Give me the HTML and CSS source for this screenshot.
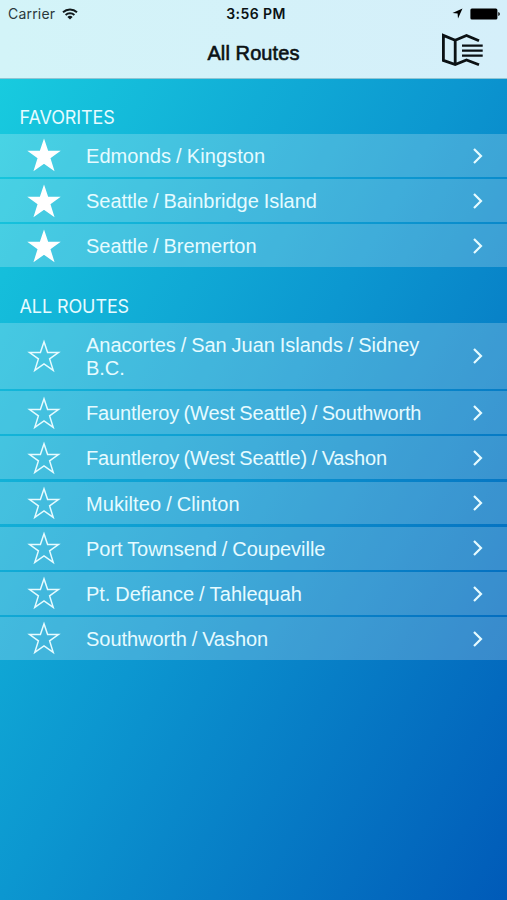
FILE: index.html
```html
<!DOCTYPE html>
<html lang="en">
<head>
  <meta charset="UTF-8" />
  <meta name="viewport" content="width=device-width, initial-scale=1" />
  <title>All Routes</title>
  <link rel="stylesheet" href="styles.css">
</head>
<body>

  <!-- Shared icons -->
  <svg class="sprite" aria-hidden="true">
    <symbol id="star" viewBox="0 0 34 34">
      <path d="M17 2.8 L20.6 13.6 H31.4 L22.6 19.9 L26.2 31.4 L17 25 L7.8 31.4 L11.4 19.9 L2.6 13.6 H13.4 Z" />
    </symbol>
    <symbol id="chevron" viewBox="0 0 12 18">
      <path d="M2 2 L9 9 L2 16" />
    </symbol>
  </svg>

  <header class="header">
    <div class="status-bar">
      <div class="status-left">
        <span class="carrier">Carrier</span>
        <svg class="wifi" width="16" height="12" viewBox="0 0 16 12">
          <path d="M1 4.3 A10.2 10.2 0 0 1 15 4.3 M3.6 7 A6.4 6.4 0 0 1 12.4 7" />
          <path class="dot" d="M8 11.6 L5.4 9 A3.7 3.7 0 0 1 10.6 9 Z" />
        </svg>
      </div>
      <span class="time">3:56 PM</span>
      <div class="status-right">
        <svg width="11" height="11" viewBox="0 0 11 11">
          <path d="M10.5 .5 L6 10.4 L5.6 5.5 L.5 5 Z" />
        </svg>
        <svg width="31" height="12" viewBox="0 0 31 12">
          <rect x=".4" y=".4" width="27" height="11.2" rx="1.5" />
          <path d="M28.3 3.9 A2.2 2.2 0 0 1 28.3 8.1 Z" />
        </svg>
      </div>
    </div>
    <div class="nav-bar">
      <h1 class="title">All Routes</h1>
      <button class="map-button" aria-label="Map">
        <svg width="42" height="34" viewBox="0 0 42 34">
          <path d="M38 7.8 L25.5 2.5 L14.2 7.2 L2.4 2.4 V27.4 L14.2 31.6 L25.5 27 L38 31.8 M14.2 7.2 V31.6" />
          <path class="lines" d="M21 12.6 H41.7 M21 17.6 H41.7 M21 22.6 H41.7" />
        </svg>
      </button>
    </div>
  </header>

  <main>
    <section>
      <h2 class="section-title">FAVORITES</h2>
      <ul class="routes">
        <li class="route">
          <svg class="star filled"><use href="#star" /></svg>
          <span class="name wide">Edmonds / Kingston</span>
          <svg class="chevron"><use href="#chevron" /></svg>
        </li>
        <li class="route">
          <svg class="star filled"><use href="#star" /></svg>
          <span class="name">Seattle / Bainbridge Island</span>
          <svg class="chevron"><use href="#chevron" /></svg>
        </li>
        <li class="route">
          <svg class="star filled"><use href="#star" /></svg>
          <span class="name">Seattle / Bremerton</span>
          <svg class="chevron"><use href="#chevron" /></svg>
        </li>
      </ul>
    </section>

    <section>
      <h2 class="section-title">ALL ROUTES</h2>
      <ul class="routes">
        <li class="route tall">
          <svg class="star"><use href="#star" /></svg>
          <span class="name">Anacortes / San Juan Islands / Sidney B.C.</span>
          <svg class="chevron"><use href="#chevron" /></svg>
        </li>
        <li class="route">
          <svg class="star"><use href="#star" /></svg>
          <span class="name long">Fauntleroy (West Seattle) / Southworth</span>
          <svg class="chevron"><use href="#chevron" /></svg>
        </li>
        <li class="route">
          <svg class="star"><use href="#star" /></svg>
          <span class="name long">Fauntleroy (West Seattle) / <span class="kern">V</span>ashon</span>
          <svg class="chevron"><use href="#chevron" /></svg>
        </li>
        <li class="route">
          <svg class="star"><use href="#star" /></svg>
          <span class="name wide">Mukilteo / Clinton</span>
          <svg class="chevron"><use href="#chevron" /></svg>
        </li>
        <li class="route">
          <svg class="star"><use href="#star" /></svg>
          <span class="name">Port Townsend / Coupeville</span>
          <svg class="chevron"><use href="#chevron" /></svg>
        </li>
        <li class="route">
          <svg class="star"><use href="#star" /></svg>
          <span class="name">Pt. Defiance / <span class="kern">T</span>ahlequah</span>
          <svg class="chevron"><use href="#chevron" /></svg>
        </li>
        <li class="route">
          <svg class="star"><use href="#star" /></svg>
          <span class="name">Southworth / <span class="kern">V</span>ashon</span>
          <svg class="chevron"><use href="#chevron" /></svg>
        </li>
      </ul>
    </section>
  </main>

</body>
</html>
```

FILE: styles.css
```css
* {
  box-sizing: border-box;
}

body {
  margin: 0;
  min-height: 100vh;
  background: linear-gradient(to bottom right, #19d0e0 0%, #0c97d0 50%, #005ab8 100%);
  font-family: "Liberation Sans", Arial, sans-serif;
  color: #fff;
}

.sprite {
  display: none;
}

/* Header */
.header {
  height: 79px;
  background: linear-gradient(to right, #d3f4f8, #d5effa);
  border-bottom: 1px solid #8fc5d3;
  color: #0b1114;
}

.status-bar {
  display: grid;
  grid-template-columns: 1fr auto 1fr;
  align-items: center;
  height: 27px;
  padding: 0 6px 0 8px;
  font-family: Inter, sans-serif;
  font-size: 14px;
}

.status-left,
.status-right {
  display: flex;
  align-items: center;
  gap: 7px;
}

.status-right {
  justify-content: flex-end;
}

.carrier {
  color: #2b383c;
  letter-spacing: 0.2px;
}

.time {
  margin-left: 3px;
  font-weight: 600;
  letter-spacing: 0.4px;
}

.wifi {
  fill: none;
  stroke: #10181a;
  stroke-width: 1.9;
}

.wifi .dot {
  fill: #10181a;
  stroke: none;
}

.nav-bar {
  display: grid;
  grid-template-columns: 1fr auto 1fr;
  align-items: center;
  height: 51px;
  padding-right: 24px;
}

.title {
  grid-column: 2;
  margin: 0 -12px 0 12px;
  font-size: 20px;
  font-weight: 400;
  line-height: 24px;
  letter-spacing: 0.1px;
  -webkit-text-stroke: 0.6px #0b1114;
}

.map-button {
  justify-self: end;
  height: 34px;
  margin-bottom: 5px;
  padding: 0;
  border: none;
  background: none;
}

.map-button svg {
  display: block;
  fill: none;
  stroke: #0b1114;
  stroke-width: 2.8;
}

.map-button .lines {
  stroke-width: 2.2;
}

/* Route lists */
.section-title {
  height: 55px;
  margin: 0;
  padding: 27.5px 20px 0 19.5px;
  font-family: Inter, sans-serif;
  font-size: 18px;
  font-weight: 400;
  line-height: 22px;
  letter-spacing: -0.1px;
  color: #e6fbff;
}

.routes {
  display: flex;
  flex-direction: column;
  gap: 2.4px;
  margin: 0 0 1.2px;
  padding: 0;
  list-style: none;
}

.route {
  display: flex;
  align-items: center;
  height: 42.8px;
  padding: 0 23px 0 27px;
  background: rgba(255, 255, 255, 0.21);
}

.route.tall {
  height: 65.4px;
}

.star {
  flex: none;
  width: 34px;
  height: 34px;
  fill: none;
  stroke: #e6fbff;
  stroke-width: 1.5;
}

.star.filled {
  fill: #fff;
  stroke: #fff;
}

.name {
  flex: 1;
  padding: 1.8px 40px 0 25px;
  font-size: 20px;
  line-height: 22.5px;
  letter-spacing: -0.03px;
  word-spacing: -0.6px;
  color: #e6fbff;
}

.name.long {
  letter-spacing: -0.15px;
  word-spacing: -0.8px;
}

.name.wide {
  letter-spacing: 0.08px;
}

/* Tighten the capital against the following "a" */
.kern {
  letter-spacing: -1.8px;
}

.chevron {
  flex: none;
  width: 12px;
  height: 18px;
  margin-top: 0.6px;
  fill: none;
  stroke: #e6fbff;
  stroke-width: 2.2;
}
```
